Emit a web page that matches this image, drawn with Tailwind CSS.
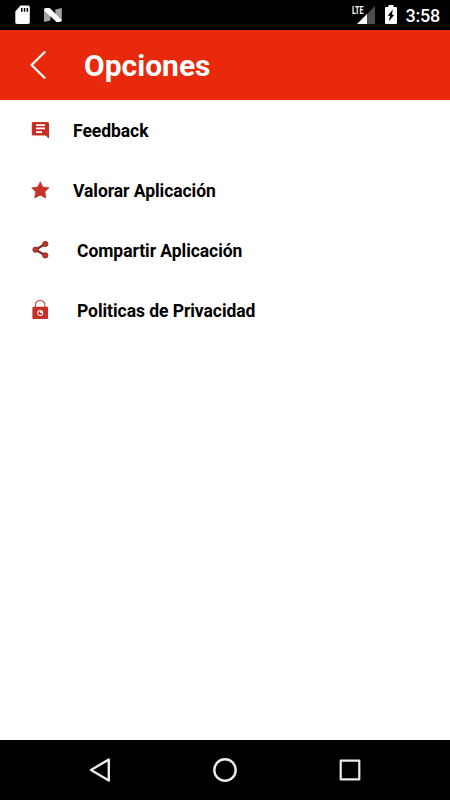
<!DOCTYPE html>
<html lang="es">
<head>
    <meta charset="UTF-8">
    <meta name="viewport" content="width=device-width, initial-scale=1.0">
    <title>Opciones</title>
    <script src="https://cdn.jsdelivr.net/npm/@tailwindcss/browser@4"></script>
</head>
<body class="bg-white font-['Roboto',sans-serif]">
    <div class="flex flex-col h-screen overflow-hidden">
        <!-- Status bar -->
        <div class="h-[30px] shrink-0 bg-black flex items-center justify-between pl-[14px] pr-[10px]">
            <div class="flex items-center">
                <!-- SD card -->
                <svg class="w-[18px] h-[30px]" viewBox="0 0 18 30">
                    <path fill="#fff" d="M6.500 5.500H14Q15.800 5.500 15.800 7.300V22.200Q15.800 24 14 24H3.100Q1.300 24 1.300 22.200V11.500Z"/>
                    <path fill="#000" d="M7 8h1.500v3.700H7zM9.800 8h1.500v3.700H9.800zM12.600 8h1.500v3.700h-1.500z"/>
                </svg>
                <!-- Android N -->
                <svg class="w-[20px] h-[30px] ml-[11px]" viewBox="0 0 20 30">
                    <path fill="#a3a3a3" d="M1 9L7.500 13V20.500L1 22zM18.800 8V21L12.300 16V9.500z"/>
                    <path fill="#fff" d="M1.200 9.300Q1.500 8 3 8H6.800L18.800 20.200Q18.500 22 16.500 22H13.500L1.200 10.500z"/>
                </svg>
            </div>
            <div class="flex items-center">
                <!-- LTE signal -->
                <svg class="w-[24px] h-[30px]" viewBox="0 0 24 30">
                    <path fill="#4d4d4d" d="M24 6V24H16V14z"/>
                    <path fill="#fff" d="M16 14V24H6z"/>
                    <text x="1" y="14" textLength="11.500" lengthAdjust="spacingAndGlyphs" font-size="10.500" font-weight="700" fill="#fff">LTE</text>
                </svg>
                <!-- Battery -->
                <svg class="w-[14px] h-[30px] ml-[9px]" viewBox="0 0 14 30">
                    <path fill="#fff" d="M4.500 5H9.500V7H12Q13 7 13 8V23Q13 24 12 24H2Q1 24 1 23V8Q1 7 2 7H4.500z"/>
                    <path fill="#000" d="M8.800 9.500L3.700 15.700H6L5 21.200L10.300 14.800H8z"/>
                </svg>
                <span class="ml-[8px] pt-[2px] text-[18px] leading-[28px] tracking-[-0.25px] font-medium text-white">3:58</span>
            </div>
        </div>

        <!-- Header -->
        <div class="h-[70px] shrink-0 bg-[#e8290b] flex items-center pl-[30px]">
            <svg class="w-[16px] h-[28px]" viewBox="0 0 16 28" fill="none" stroke="#fff" stroke-width="2.200" stroke-linecap="round" stroke-linejoin="round">
                <path d="M14.500 1.200L1.500 14L14.500 26.800"/>
            </svg>
            <h1 class="ml-[38px] mt-[2px] text-[30px] leading-[36px] font-bold text-white">Opciones</h1>
        </div>

        <!-- Options -->
        <div class="flex-1 flex flex-col text-[17.5px] tracking-[-0.05px] font-bold text-black">
            <div class="h-[60px] flex items-center pl-[30px]">
                <svg class="w-[20px] h-[20px]" viewBox="0 0 20 20">
                    <path fill="#c62f23" d="M3 2H17.500Q19 2 19 3.500V18.500L15.500 15.500H3Q1.800 15.500 1.800 14.300V3.300Q1.800 2 3 2z"/>
                    <path fill="#fff" d="M6 4.200h9v1.700H6zM6 7.500h9v1.700H6zM6 11.300h6v1.700H6z"/>
                </svg>
                <span class="ml-[23px] pt-[2px]">Feedback</span>
            </div>
            <div class="h-[60px] flex items-center pl-[30px]">
                <svg class="w-[20px] h-[20px]" viewBox="0 0 20 20">
                    <path fill="#c93429" stroke="#a72d24" stroke-width=".6" stroke-linejoin="round" d="M10.300 1.700L12.900 7L19 7.700L14.900 11.800L16 18L10.300 15.200L4.600 18L5.700 11.800L1.600 7.700L7.700 7z"/>
                </svg>
                <span class="ml-[23px] pt-[2px]">Valorar Aplicación</span>
            </div>
            <div class="h-[60px] flex items-center pl-[30px]">
                <svg class="w-[20px] h-[20px]" viewBox="0 0 20 20">
                    <path fill="none" stroke="#592420" stroke-width="2.200" d="M15.200 4L5.500 9.700L15.200 15.300"/>
                    <path fill="none" stroke="#b52f27" stroke-width="1" d="M15.200 4L5.500 9.700L15.200 15.300"/>
                    <g fill="#c93429" stroke="#672721" stroke-width=".7">
                        <circle cx="15.300" cy="4" r="2.700"/>
                        <circle cx="5.500" cy="9.700" r="2.700"/>
                        <circle cx="15.300" cy="15.400" r="2.700"/>
                    </g>
                </svg>
                <span class="ml-[27px] pt-[2px]">Compartir Aplicación</span>
            </div>
            <div class="h-[60px] flex items-center pl-[30px]">
                <svg class="w-[20px] h-[20px]" viewBox="0 0 20 20">
                    <path fill="none" stroke="#c94a42" stroke-width="1.100" d="M5.500 7V4.800Q5.800 .5 10.200 .5Q14.600 .5 14.900 4.800V7"/>
                    <rect x="2.400" y="6.800" width="15.700" height="12.300" rx="1" fill="#c52f27"/>
                    <circle cx="10.200" cy="13" r="3" fill="#fff"/>
                    <path fill="#c52f27" d="M10.200 11.300V13H12A1.900 1.900 0 1 1 10.200 11.300z"/>
                </svg>
                <span class="ml-[27px] pt-[2px]">Politicas de Privacidad</span>
            </div>
        </div>

        <!-- Navigation bar -->
        <div class="h-[60px] shrink-0 bg-black flex items-center justify-between px-[87px]">
            <svg class="w-[26px] h-[26px]" viewBox="0 0 26 26" fill="none" stroke="#ececec" stroke-width="2.400" stroke-linejoin="round">
                <path d="M21.800 2.500V23.500L4 13z"/>
            </svg>
            <svg class="w-[26px] h-[26px]" viewBox="0 0 26 26" fill="none" stroke="#ececec" stroke-width="2.400">
                <circle cx="13" cy="13" r="10.700"/>
            </svg>
            <svg class="w-[26px] h-[26px]" viewBox="0 0 26 26" fill="none" stroke="#ececec" stroke-width="2.200" stroke-linejoin="round">
                <rect x="3.700" y="3.700" width="18.600" height="18.600"/>
            </svg>
        </div>
    </div>
</body>
</html>
